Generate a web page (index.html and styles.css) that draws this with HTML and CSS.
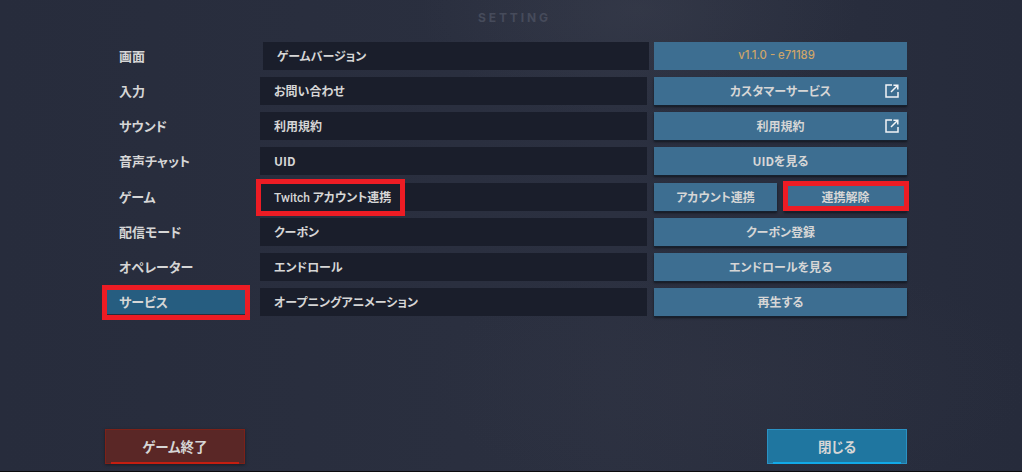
FILE: index.html
```html
<!DOCTYPE html>
<html lang="ja">
<head>
<meta charset="utf-8">
<title>SETTING</title>
<link rel="stylesheet" href="styles.css">
</head>
<body>
<div class="screen">
  <h1 class="title">SETTING</h1>
  <main class="content">
    <nav class="nav">
      <div class="nav-item">画面</div>
      <div class="nav-item">入力</div>
      <div class="nav-item">サウンド</div>
      <div class="nav-item">音声チャット</div>
      <div class="nav-item">ゲーム</div>
      <div class="nav-item">配信モード</div>
      <div class="nav-item">オペレーター</div>
      <div class="nav-item active">サービス<span class="mark"></span></div>
    </nav>
    <section class="rows">
      <div class="row first">
        <div class="label">ゲームバージョン</div>
        <div class="actions"><div class="btn flat version">v1.1.0 - e71189</div></div>
      </div>
      <div class="row">
        <div class="label">お問い合わせ</div>
        <div class="actions"><div class="btn">カスタマーサービス
          <svg class="ext" viewBox="0 0 14 14" aria-hidden="true"><path d="M7 1H1V13H13V8" fill="none" stroke="#f2f4f6" stroke-width="1.5"/><path d="M6 8L12 2M8.4 1.2H12.8V5.6" fill="none" stroke="#f2f4f6" stroke-width="1.5"/></svg>
        </div></div>
      </div>
      <div class="row">
        <div class="label">利用規約</div>
        <div class="actions"><div class="btn">利用規約
          <svg class="ext" viewBox="0 0 14 14" aria-hidden="true"><path d="M7 1H1V13H13V8" fill="none" stroke="#f2f4f6" stroke-width="1.5"/><path d="M6 8L12 2M8.4 1.2H12.8V5.6" fill="none" stroke="#f2f4f6" stroke-width="1.5"/></svg>
        </div></div>
      </div>
      <div class="row">
        <div class="label">UID</div>
        <div class="actions"><div class="btn">UIDを見る</div></div>
      </div>
      <div class="row">
        <div class="label"><span class="twitch">Twitch</span> アカウント連携<span class="mark mark-twitch"></span></div>
        <div class="actions split">
          <div class="btn">アカウント連携</div>
          <div class="btn">連携解除<span class="mark mark-unlink"></span></div>
        </div>
      </div>
      <div class="row">
        <div class="label">クーポン</div>
        <div class="actions"><div class="btn">クーポン登録</div></div>
      </div>
      <div class="row">
        <div class="label">エンドロール</div>
        <div class="actions"><div class="btn">エンドロールを見る</div></div>
      </div>
      <div class="row">
        <div class="label">オープニングアニメーション</div>
        <div class="actions"><div class="btn">再生する</div></div>
      </div>
    </section>
  </main>
  <footer class="footer">
    <div class="big-btn quit">ゲーム終了</div>
    <div class="big-btn close">閉じる</div>
  </footer>
</div>
</body>
</html>
```

FILE: styles.css
```css
* { box-sizing: border-box; }
html, body { margin: 0; padding: 0; background: #0b0b0e; }
body {
  width: 1022px;
  height: 472px;
  overflow: hidden;
  font-family: "Noto Sans CJK JP", "Noto Sans", sans-serif;
  font-weight: 700;
  font-feature-settings: "palt";
  color: #d6d6d6;
}
.screen {
  width: 1022px;
  height: 471px;
  display: flex;
  flex-direction: column;
  background:
    radial-gradient(ellipse 220px 110px at 640px 10px, rgba(70,74,88,.3), transparent),
    radial-gradient(ellipse 300px 130px at 730px 380px, rgba(60,62,76,.2), transparent),
    linear-gradient(90deg, #272c3c 0%, #292e3e 30%, #2b3040 60%, #262b3b 100%);
}
.title {
  margin: 0;
  height: 42px;
  padding: 9px 0 0 7px;
  text-align: center;
  font: 700 12px/18px "Inter", "Liberation Sans", sans-serif;
  letter-spacing: 2.9px;
  color: #464b5b;
}
.content {
  display: flex;
  gap: 15px;
  padding-left: 107px;
}
.nav, .rows {
  display: flex;
  flex-direction: column;
  gap: 7.14px;
}
.nav { width: 138px; }
.nav-item {
  position: relative;
  height: 28px;
  padding-left: 12px;
  font-size: 13px;
  line-height: 27px;
}
.nav-item.active { background: linear-gradient(#265d80, #265d80) center / 100% 25px no-repeat; }
.mark {
  position: absolute;
  border: 5px solid #ed1c24;
  pointer-events: none;
}
.nav-item .mark { left: -5px; right: -5px; top: -3px; bottom: -4px; }
.row {
  display: flex;
  gap: 7px;
  height: 28px;
}
.label {
  position: relative;
  width: 387px;
  padding-left: 14px;
  font-size: 12px;
  line-height: 27px;
  background: #1a1e2b;
}
.twitch { font-family: "Roboto", sans-serif; font-weight: 500; }
.row.first { gap: 5px; }
.row.first .label { margin-left: 3px; width: 386px; }
.actions {
  display: flex;
  width: 253px;
}
.actions.split { gap: 7px; }
.btn {
  position: relative;
  flex: 1;
  text-align: center;
  font-size: 12px;
  line-height: 27px;
  background: #3d6e91;
  box-shadow: 0 1px 0 #16202e, 0 2px 2px rgba(8,10,16,.65);
}
.btn.flat { box-shadow: none; }
.version {
  padding-right: 8px;
  font-family: "Inter", "Liberation Sans", sans-serif;
  font-weight: 500;
  font-size: 11.3px;
  color: #cfa569;
}
.ext {
  position: absolute;
  right: 8px;
  top: 7px;
  width: 14px;
  height: 14px;
}
.mark-twitch { left: -4px; top: -4px; bottom: -5px; width: 149px; }
.mark-unlink { left: -1px; right: -2px; top: -2px; bottom: 0; }
.footer {
  display: flex;
  justify-content: space-between;
  margin-top: auto;
  margin-bottom: 7px;
  padding: 0 115px 0 105px;
}
.big-btn {
  position: relative;
  width: 140px;
  height: 35px;
  text-align: center;
  font-size: 13.5px;
  line-height: 33px;
  border: 1px solid;
}
.big-btn::after {
  content: "";
  position: absolute;
  left: 5px;
  right: 5px;
  bottom: -1px;
  height: 2px;
}
.quit { background: #5a2726; border-color: #7c2118; box-shadow: 0 1px 3px rgba(0,0,0,.4); }
.quit::after { background: #c41e10; }
.close { background: #1f76a0; border-color: #2a92c4; }
.close::after { background: #12a9e8; }
```
